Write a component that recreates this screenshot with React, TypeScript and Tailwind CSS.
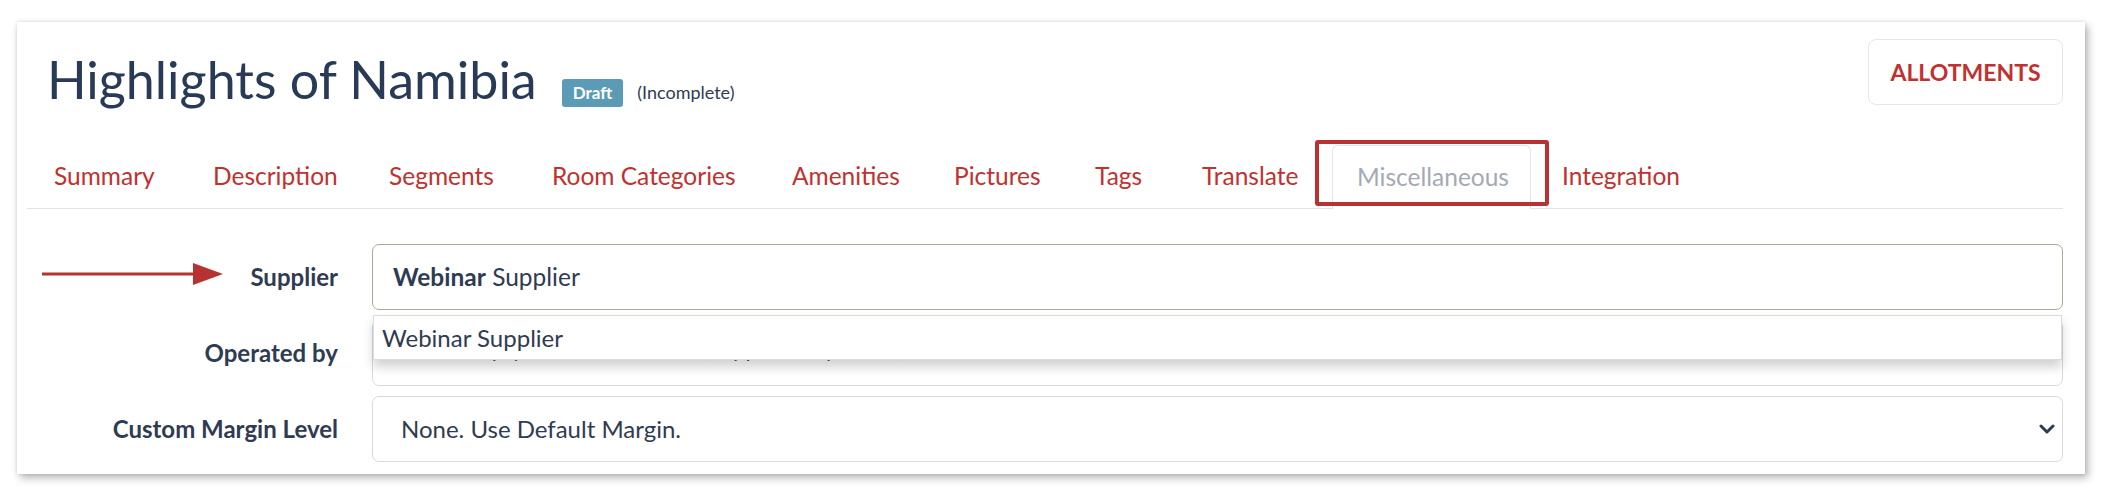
import React from "react";

const tabs = [
  { label: "Summary", w: "w-[159px]" },
  { label: "Description", w: "w-[176px]" },
  { label: "Segments", w: "w-[163px]" },
  { label: "Room Categories", w: "w-[240px]" },
  { label: "Amenities", w: "w-[162px]" },
  { label: "Pictures", w: "w-[141px]" },
  { label: "Tags", w: "w-[107px]" },
  { label: "Translate", w: "w-[155px]" },
  { label: "Miscellaneous", w: "w-[205px]", active: true },
  { label: "Integration", w: "w-[170px]" },
];

const Label = ({ children }: { children: React.ReactNode }) => (
  <div className="relative flex items-center justify-end h-[66px] text-[24px] font-bold text-[#2f3b52]">
    {children}
  </div>
);

const App = () => {
  return (
    <div
      className="min-h-screen bg-white pt-[22px] pl-[17px]"
      style={{ fontFamily: "Lato, 'Noto Sans', sans-serif" }}
    >
      <div className="w-[2068px] bg-white pl-[10px] pr-[22px] pt-[17px] pb-[12px] shadow-[0_0_4px_rgba(0,0,0,0.12),3px_4px_8px_rgba(0,0,0,0.28)]">
        {/* Header */}
        <div className="flex justify-between items-start h-[70px] pl-[20px]">
          <div className="flex items-baseline mt-[10px]">
            <h1 className="text-[52px] leading-[60px] text-[#283a56]">Highlights of Namibia</h1>
            <span className="ml-[25px] h-[28px] px-[11px] rounded-[3px] bg-[#5b9bb5] text-white text-[17px] leading-[28px] font-bold">
              Draft
            </span>
            <span className="ml-[14px] text-[18px] text-[#2f3b52]">(Incomplete)</span>
          </div>
          <button className="w-[195px] h-[66px] rounded-[8px] border border-[#e6e6e6] bg-white text-[23px] font-bold text-[#c0312f]">
            ALLOTMENTS
          </button>
        </div>

        {/* Tabs */}
        <div className="mt-[36px] flex h-[64px] border-b border-[#e4e4e4]">
          {tabs.map((t) => (
            <div key={t.label} className={`relative shrink-0 ${t.w}`}>
              {t.active ? (
                <>
                  <div className="ml-[2px] w-[199px] h-[64px] -mb-px flex items-center pl-[24px] rounded-t-[6px] border border-b-0 border-[#e4e4e4] bg-white text-[24.5px] text-[#a4a9b4]">
                    {t.label}
                  </div>
                  <div className="absolute left-[-15px] top-[-5px] right-[-14px] bottom-[2px] border-[4px] border-[#b83232] rounded-[3px]" />
                </>
              ) : (
                <div className="h-[63px] flex items-center pl-[27px] text-[24.5px] text-[#c0312f]">{t.label}</div>
              )}
            </div>
          ))}
        </div>

        {/* Form */}
        <div className="mt-[35px] grid grid-cols-[311px_1fr] gap-x-[34px] gap-y-[10px]">
          <Label>
            <svg className="absolute left-[15px] top-[19px]" width="181" height="22" viewBox="0 0 181 22">
              <line x1="0" y1="11" x2="156" y2="11" stroke="#b83232" strokeWidth="3" />
              <polygon points="151,0 181,11 151,22" fill="#b83232" />
            </svg>
            Supplier
          </Label>
          <div className="relative">
            <div className="h-[66px] rounded-[7px] border border-[#a9aa97] flex items-center pl-[20px] text-[24.5px] text-[#2f3b52]">
              <span className="font-bold">Webinar</span>
              <span>&nbsp;Supplier</span>
            </div>
            <div className="absolute z-10 top-[71px] left-[1px] right-[1px] h-[45px] bg-white border border-[#dcdcdc] shadow-[0_7px_10px_rgba(0,0,0,0.18)] flex items-center pl-[8px] text-[24px] text-[#2f3b52]">
              Webinar Supplier
            </div>
          </div>

          <Label>Operated by</Label>
          <div className="h-[66px] rounded-[7px] border border-[#dadada] flex items-center pl-[28px] pb-[9px] text-[22px] text-[#4b5563]">
            Leave empty if the same as the (Supplier is operator)
          </div>

          <Label>Custom Margin Level</Label>
          <div className="h-[66px] rounded-[7px] border border-[#dadada] flex items-center justify-between pl-[28px] pr-[7px] text-[24px] text-[#2f3b52]">
            <span>None. Use Default Margin.</span>
            <svg width="16" height="10" viewBox="0 0 16 10">
              <path d="M2 2 L8 8 L14 2" fill="none" stroke="#2f3b52" strokeWidth="3" strokeLinecap="round" strokeLinejoin="round" />
            </svg>
          </div>
        </div>
      </div>
    </div>
  );
};

export default App;
